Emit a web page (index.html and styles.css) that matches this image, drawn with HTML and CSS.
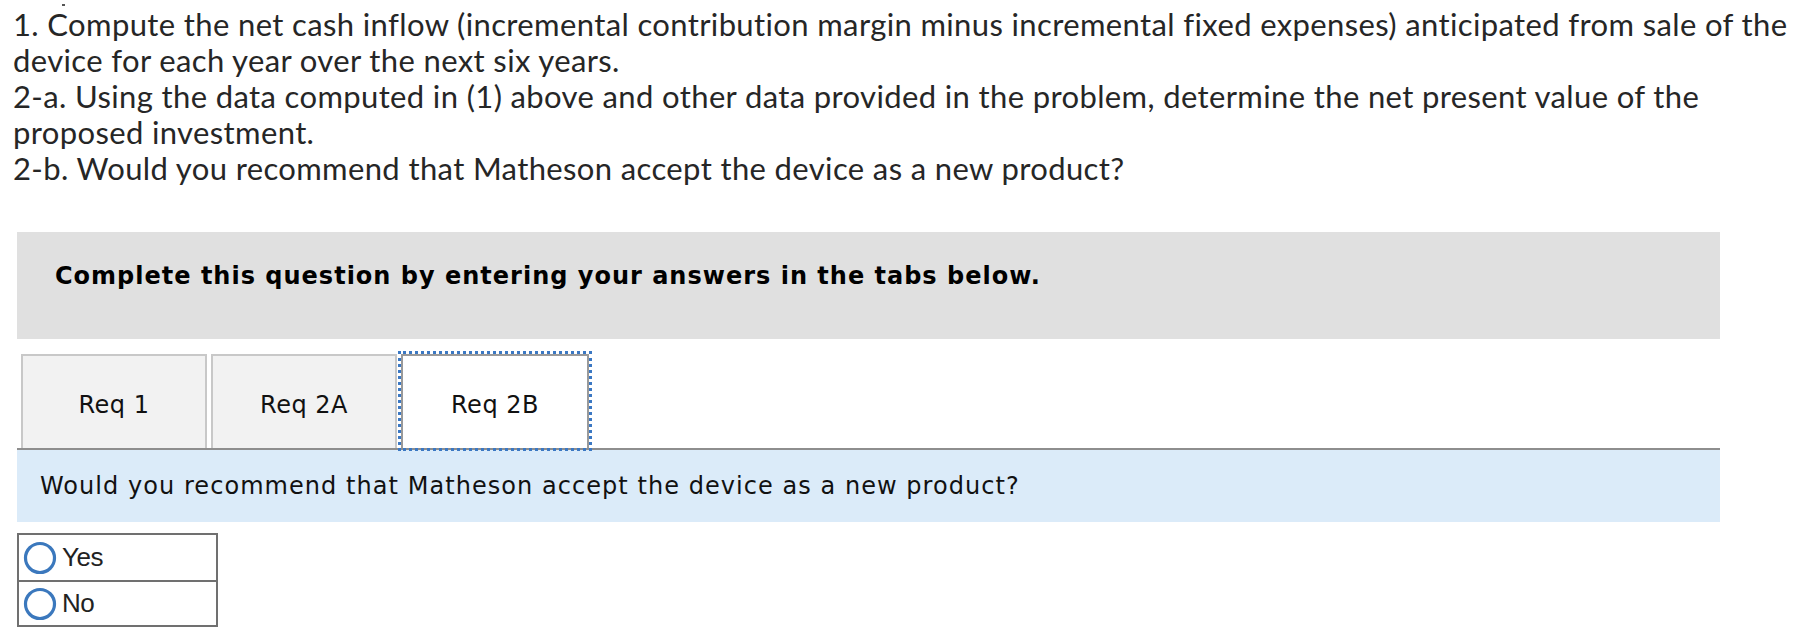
FILE: index.html
```html
<!DOCTYPE html>
<html lang="en">
<head>
<meta charset="utf-8">
<title>Req 2B</title>
<link rel="stylesheet" href="styles.css">
</head>
<body>
<div class="page">
  <div class="question">
    <div class="mark"></div>
    <p class="line">1. Compute the net cash inflow (incremental contribution margin minus incremental fixed expenses) anticipated from sale of the</p>
    <p class="line">device for each year over the next six years.</p>
    <p class="line">2-a. Using the data computed in (1) above and other data provided in the problem, determine the net present value of the</p>
    <p class="line">proposed investment.</p>
    <p class="line">2-b. Would you recommend that Matheson accept the device as a new product?</p>
  </div>

  <div class="widget">
    <div class="banner">Complete this question by entering your answers in the tabs below.</div>

    <div class="tabs">
      <div class="tab">Req 1</div>
      <div class="tab">Req 2A</div>
      <div class="tab tab-active">Req 2B</div>
    </div>

    <div class="prompt">Would you recommend that Matheson accept the device as a new product?</div>

    <div class="choices">
      <label class="choice">
        <svg class="radio" width="34" height="34" viewBox="0 0 34 34"><circle cx="17" cy="17" r="14.5" fill="#fff" stroke="#3b78bd" stroke-width="3.2"/></svg>
        <span>Yes</span>
      </label>
      <label class="choice">
        <svg class="radio" width="34" height="34" viewBox="0 0 34 34"><circle cx="17" cy="17" r="14.5" fill="#fff" stroke="#3b78bd" stroke-width="3.2"/></svg>
        <span>No</span>
      </label>
    </div>
  </div>
</div>
</body>
</html>
```

FILE: styles.css
```css
html, body {
  margin: 0;
  padding: 0;
  background: #ffffff;
}

.page {
  width: 1796px;
}

.question {
  padding: 4px 0 0 13px;
  font-family: Lato, "Liberation Sans", Arial, sans-serif;
  font-size: 31px;
  letter-spacing: 0.37px;
  font-variant-ligatures: none;
  line-height: 36px;
  color: #262626;
}

.mark {
  width: 3px;
  height: 2px;
  margin-left: 49px;
  background: #555555;
}

.line {
  margin: 0;
  white-space: nowrap;
}

.widget {
  margin: 46px 0 0 17px;
  width: 1703px;
  font-family: "DejaVu Sans", Verdana, sans-serif;
  color: #000000;
}

.banner {
  background: #e0e0e0;
  height: 107px;
  box-sizing: border-box;
  padding: 30px 0 0 38px;
  font-size: 24px;
  letter-spacing: 1px;
  line-height: 28px;
  font-weight: bold;
}

.tabs {
  display: flex;
  align-items: flex-end;
  gap: 4px;
  margin-top: 15px;
  padding-left: 4px;
  border-bottom: 2px solid #8e8e8e;
}

.tab {
  flex: 0 0 186px;
  height: 94px;
  box-sizing: border-box;
  display: flex;
  align-items: center;
  justify-content: center;
  padding-top: 5px;
  background: #f2f2f2;
  border: 2px solid #c8c8c8;
  border-bottom: none;
  font-size: 24px;
  letter-spacing: 0.5px;
  color: #111111;
}

.tab-active {
  flex-basis: 188px;
  background: #ffffff;
  border-color: #9a9a9a;
  outline: 3px dotted #3b78c3;
  position: relative;
  z-index: 1;
}

.prompt {
  background: #dbebf9;
  height: 72px;
  box-sizing: border-box;
  display: flex;
  align-items: center;
  padding: 0 0 0 23px;
  font-size: 24px;
  letter-spacing: 1.05px;
  color: #111111;
}

.choices {
  margin-top: 11px;
  width: 201px;
  box-sizing: border-box;
  border: 2px solid #707070;
  font-family: "Liberation Sans", Arial, sans-serif;
  font-size: 26px;
  letter-spacing: -0.5px;
  color: #222222;
}

.choice {
  display: flex;
  align-items: center;
  gap: 5px;
  height: 45px;
  padding-left: 4px;
}

.choice + .choice {
  border-top: 2px solid #707070;
  height: 43px;
}

.radio {
  display: block;
  flex: 0 0 auto;
}
```
